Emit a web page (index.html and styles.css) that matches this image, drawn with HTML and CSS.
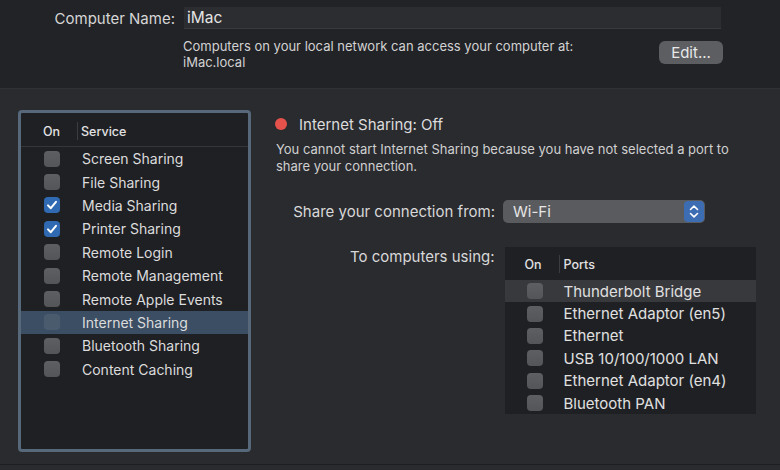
FILE: index.html
```html
<!DOCTYPE html>
<html>
<head>
<meta charset="utf-8">
<link rel="stylesheet" href="styles.css">
</head>
<body>
<div class="window">
  <section class="top">
    <div class="name-row">
      <label class="name-label">Computer Name:</label>
      <div class="name-input">iMac</div>
    </div>
    <div class="desc-row">
      <p class="net-desc">Computers on your local network can access your computer at:<br>iMac.local</p>
      <button class="btn">Edit...</button>
    </div>
  </section>

  <section class="main">
    <div class="list">
      <div class="list-head">
        <span class="col-on">On</span>
        <span class="col-sep"></span>
        <span class="col-name">Service</span>
      </div>
      <div class="row"><span class="cb"></span><span class="label">Screen Sharing</span></div>
      <div class="row"><span class="cb"></span><span class="label">File Sharing</span></div>
      <div class="row"><span class="cb checked"><svg viewBox="0 0 16 16"><path d="M4 8.4 L6.8 11.2 L12 4.8" /></svg></span><span class="label">Media Sharing</span></div>
      <div class="row"><span class="cb checked"><svg viewBox="0 0 16 16"><path d="M4 8.4 L6.8 11.2 L12 4.8" /></svg></span><span class="label">Printer Sharing</span></div>
      <div class="row"><span class="cb"></span><span class="label">Remote Login</span></div>
      <div class="row"><span class="cb"></span><span class="label">Remote Management</span></div>
      <div class="row"><span class="cb"></span><span class="label">Remote Apple Events</span></div>
      <div class="row selected"><span class="cb"></span><span class="label">Internet Sharing</span></div>
      <div class="row"><span class="cb"></span><span class="label">Bluetooth Sharing</span></div>
      <div class="row"><span class="cb"></span><span class="label">Content Caching</span></div>
    </div>

    <div class="detail">
      <div class="status">
        <span class="dot"></span>
        <span class="status-text">Internet Sharing: Off</span>
      </div>
      <p class="detail-desc">You cannot start Internet Sharing because you have not selected a port to share your connection.</p>

      <div class="form-row">
        <span class="form-label">Share your connection from:</span>
        <div class="popup">
          <span class="popup-value">Wi-Fi</span>
          <span class="stepper"><svg viewBox="0 0 20 21"><path d="M6.5 8.5 L10 5.2 L13.5 8.5 M6.5 12.5 L10 15.8 L13.5 12.5"/></svg></span>
        </div>
      </div>

      <div class="form-row ports-row">
        <span class="form-label">To computers using:</span>
        <div class="ports">
          <div class="ports-head">
            <span class="p-on">On</span>
            <span class="p-sep"></span>
            <span class="p-name">Ports</span>
          </div>
          <div class="prow hover"><span class="cb"></span><span class="label">Thunderbolt Bridge</span></div>
          <div class="prow"><span class="cb"></span><span class="label">Ethernet Adaptor (en5)</span></div>
          <div class="prow"><span class="cb"></span><span class="label">Ethernet</span></div>
          <div class="prow"><span class="cb"></span><span class="label">USB 10/100/1000 LAN</span></div>
          <div class="prow"><span class="cb"></span><span class="label">Ethernet Adaptor (en4)</span></div>
          <div class="prow"><span class="cb"></span><span class="label">Bluetooth PAN</span></div>
        </div>
      </div>
    </div>
  </section>
  <div class="bottom"></div>
</div>
</body>
</html>
```

FILE: styles.css
```css
* { box-sizing: border-box; }

html, body {
  margin: 0;
  padding: 0;
  background: #2a2b2f;
}

body {
  font-family: "Inter", "Liberation Sans", sans-serif;
  color: #dedede;
  width: 780px;
  height: 470px;
  overflow: hidden;
}

.window {
  width: 780px;
  height: 470px;
  display: flex;
  flex-direction: column;
}

/* ---------- top ---------- */
.top {
  height: 89px;
  background: #222327;
  border-bottom: 1px solid #303135;
  padding-top: 7px;
}

.name-row {
  display: flex;
  align-items: center;
}

.name-label {
  width: 176px;
  text-align: right;
  padding-right: 1px;
  font-size: 15px;
  color: #d6d6d6;
}

.name-input {
  margin-left: 8px;
  width: 537px;
  height: 22px;
  background: #2c2d31;
  border-bottom: 1px solid #3a3b3f;
  font-size: 15.5px;
  line-height: 22px;
  padding-left: 3px;
  color: #e4e4e4;
}

.desc-row {
  display: flex;
  align-items: flex-start;
  margin-top: 9px;
  padding-left: 183px;
}

.net-desc {
  margin: 0;
  font-size: 13px;
  line-height: 16px;
  color: #d2d2d2;
  width: 476px;
}

.btn {
  margin-top: 3px;
  width: 64px;
  height: 23px;
  border: none;
  border-radius: 6px;
  background: #5d5e62;
  color: #e8e8e8;
  font-family: inherit;
  font-size: 15px;
  padding: 0;
}

/* ---------- main ---------- */
.main {
  height: 376px;
  display: flex;
  align-items: flex-start;
  padding: 21px 0 0 18px;
  background: #2a2b2f;
  border-bottom: 1px solid #1d1e21;
}

.list {
  width: 233px;
  height: 342px;
  border: 3px solid #56687a;
  border-radius: 4px;
  background: #1f2024;
}

.list-head {
  height: 34px;
  display: flex;
  align-items: center;
  padding-top: 3px;
  border-bottom: 1px solid #35363a;
  font-size: 12.5px;
  font-weight: 500;
  color: #e2e2e2;
}

.col-on {
  margin-left: 22px;
  width: 34px;
}

.col-sep {
  width: 1px;
  height: 18px;
  background: #3c3d41;
  margin-right: 3px;
}

.row {
  height: 23.4px;
  display: flex;
  align-items: center;
  font-size: 14px;
  color: #dcdcdc;
}

.row .cb {
  margin-left: 23px;
}

.row .label {
  margin-left: 22px;
}

.row.selected {
  background: #3b4e63;
}

.row.selected .cb {
  background: #4a5b6e;
}

.cb {
  width: 16px;
  height: 16px;
  border-radius: 4px;
  background: linear-gradient(#5e5f62, #545558);
  display: flex;
  align-items: center;
  justify-content: center;
  flex: none;
}

.cb.checked {
  background: #2f6ab2;
}

.cb svg {
  width: 16px;
  height: 16px;
  fill: none;
  stroke: #ffffff;
  stroke-width: 2;
  stroke-linecap: round;
  stroke-linejoin: round;
}

/* ---------- detail ---------- */
.detail {
  margin-left: 25px;
  margin-top: 4px;
  width: 480px;
}

.status {
  height: 20px;
  display: flex;
  align-items: center;
}

.dot {
  width: 12px;
  height: 12px;
  border-radius: 50%;
  background: #e5524c;
  margin-left: -1px;
}

.status-text {
  margin-left: 12px;
  font-size: 15px;
  color: #dcdcdc;
}

.detail-desc {
  margin: 7px 0 0;
  font-size: 13px;
  line-height: 17px;
  color: #d0d0d0;
  width: 470px;
}

.form-row {
  display: flex;
  align-items: center;
  margin-top: 25px;
}

.form-label {
  width: 219px;
  text-align: right;
  font-size: 15px;
  color: #d8d8d8;
}

.popup {
  margin-left: 8px;
  width: 202px;
  height: 23px;
  border-radius: 5px;
  background: #5a5b5f;
  display: flex;
  align-items: center;
  justify-content: space-between;
  padding: 0 1px 0 10px;
}

.popup-value {
  font-size: 15px;
  color: #e6e6e6;
}

.stepper {
  width: 20px;
  height: 21px;
  border-radius: 4px;
  background: #3c6db2;
  display: flex;
}

.stepper svg {
  width: 20px;
  height: 21px;
  fill: none;
  stroke: #ffffff;
  stroke-width: 1.6;
  stroke-linecap: round;
  stroke-linejoin: round;
}

.ports-row {
  align-items: flex-start;
  margin-top: 24px;
}

.ports-row .form-label {
  line-height: 16px;
  padding-top: 2px;
}

.ports {
  margin-left: 10px;
  width: 252px;
  height: 167px;
  background: #1f2024;
}

.ports-head {
  height: 33px;
  display: flex;
  align-items: center;
  padding-top: 1px;
  font-size: 12.5px;
  font-weight: 500;
  color: #e2e2e2;
}

.p-on {
  margin-left: 20px;
  width: 34px;
}

.p-sep {
  width: 1px;
  height: 18px;
  background: #3c3d41;
  margin-right: 4px;
}

.prow {
  height: 22.4px;
  display: flex;
  align-items: center;
  font-size: 15px;
  color: #e0e0e0;
}

.prow.hover {
  background: #38393d;
}

.prow .cb {
  margin-left: 22px;
}

.prow .label {
  margin-left: 21px;
}

.bottom {
  flex: 1;
  background: #2a2b2f;
}
```
